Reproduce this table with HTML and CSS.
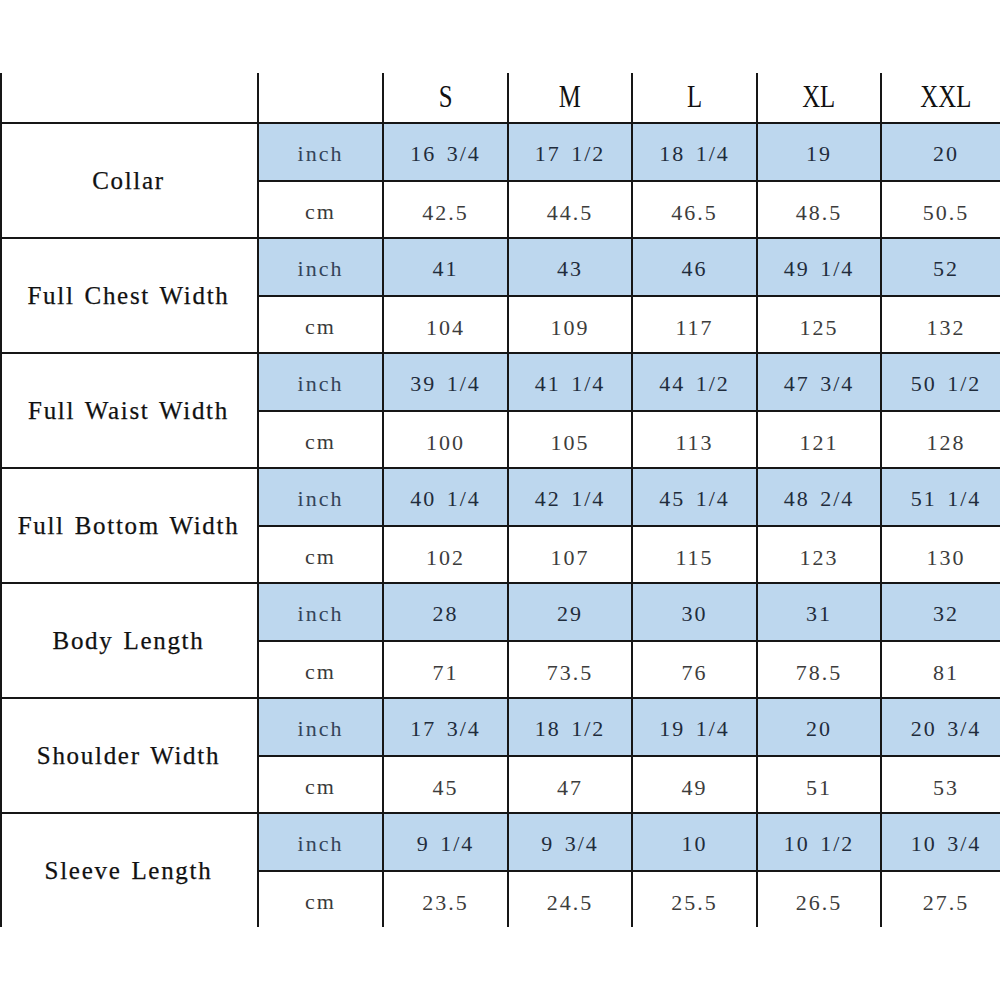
FILE: index.html
```html
<!DOCTYPE html>
<html>
<head>
<meta charset="utf-8">
<link rel="stylesheet" href="styles.css">
</head>
<body>
<div class="sheet">
  <div class="cell head"></div>
  <div class="cell head"></div>
  <div class="cell head"><span class="sz">S</span></div>
  <div class="cell head"><span class="sz">M</span></div>
  <div class="cell head"><span class="sz">L</span></div>
  <div class="cell head"><span class="sz">XL</span></div>
  <div class="cell head"><span class="sz">XXL</span></div>

  <div class="cell label">Collar</div>
  <div class="cell blue unit">inch</div>
  <div class="cell blue val">16 3/4</div>
  <div class="cell blue val">17 1/2</div>
  <div class="cell blue val">18 1/4</div>
  <div class="cell blue val">19</div>
  <div class="cell blue val">20</div>
  <div class="cell unit cm">cm</div>
  <div class="cell val cmv">42.5</div>
  <div class="cell val cmv">44.5</div>
  <div class="cell val cmv">46.5</div>
  <div class="cell val cmv">48.5</div>
  <div class="cell val cmv">50.5</div>

  <div class="cell label">Full Chest Width</div>
  <div class="cell blue unit">inch</div>
  <div class="cell blue val">41</div>
  <div class="cell blue val">43</div>
  <div class="cell blue val">46</div>
  <div class="cell blue val">49 1/4</div>
  <div class="cell blue val">52</div>
  <div class="cell unit cm">cm</div>
  <div class="cell val cmv">104</div>
  <div class="cell val cmv">109</div>
  <div class="cell val cmv">117</div>
  <div class="cell val cmv">125</div>
  <div class="cell val cmv">132</div>

  <div class="cell label">Full Waist Width</div>
  <div class="cell blue unit">inch</div>
  <div class="cell blue val">39 1/4</div>
  <div class="cell blue val">41 1/4</div>
  <div class="cell blue val">44 1/2</div>
  <div class="cell blue val">47 3/4</div>
  <div class="cell blue val">50 1/2</div>
  <div class="cell unit cm">cm</div>
  <div class="cell val cmv">100</div>
  <div class="cell val cmv">105</div>
  <div class="cell val cmv">113</div>
  <div class="cell val cmv">121</div>
  <div class="cell val cmv">128</div>

  <div class="cell label">Full Bottom Width</div>
  <div class="cell blue unit">inch</div>
  <div class="cell blue val">40 1/4</div>
  <div class="cell blue val">42 1/4</div>
  <div class="cell blue val">45 1/4</div>
  <div class="cell blue val">48 2/4</div>
  <div class="cell blue val">51 1/4</div>
  <div class="cell unit cm">cm</div>
  <div class="cell val cmv">102</div>
  <div class="cell val cmv">107</div>
  <div class="cell val cmv">115</div>
  <div class="cell val cmv">123</div>
  <div class="cell val cmv">130</div>

  <div class="cell label">Body Length</div>
  <div class="cell blue unit">inch</div>
  <div class="cell blue val">28</div>
  <div class="cell blue val">29</div>
  <div class="cell blue val">30</div>
  <div class="cell blue val">31</div>
  <div class="cell blue val">32</div>
  <div class="cell unit cm">cm</div>
  <div class="cell val cmv">71</div>
  <div class="cell val cmv">73.5</div>
  <div class="cell val cmv">76</div>
  <div class="cell val cmv">78.5</div>
  <div class="cell val cmv">81</div>

  <div class="cell label">Shoulder Width</div>
  <div class="cell blue unit">inch</div>
  <div class="cell blue val">17 3/4</div>
  <div class="cell blue val">18 1/2</div>
  <div class="cell blue val">19 1/4</div>
  <div class="cell blue val">20</div>
  <div class="cell blue val">20 3/4</div>
  <div class="cell unit cm">cm</div>
  <div class="cell val cmv">45</div>
  <div class="cell val cmv">47</div>
  <div class="cell val cmv">49</div>
  <div class="cell val cmv">51</div>
  <div class="cell val cmv">53</div>

  <div class="cell label">Sleeve Length</div>
  <div class="cell blue unit">inch</div>
  <div class="cell blue val">9 1/4</div>
  <div class="cell blue val">9 3/4</div>
  <div class="cell blue val">10</div>
  <div class="cell blue val">10 1/2</div>
  <div class="cell blue val">10 3/4</div>
  <div class="cell unit cm">cm</div>
  <div class="cell val cmv">23.5</div>
  <div class="cell val cmv">24.5</div>
  <div class="cell val cmv">25.5</div>
  <div class="cell val cmv">26.5</div>
  <div class="cell val cmv">27.5</div>
</div>
</body>
</html>
```

FILE: styles.css
```css
html, body {
  margin: 0;
  padding: 0;
  background: #ffffff;
  overflow: hidden;
}
body {
  width: 1000px;
  height: 1000px;
}
.sheet {
  margin-top: 73px;
  width: 1010px;
  display: grid;
  grid-template-columns: 257px 125px 125px 124px 125px 124px 130px;
  grid-template-rows: 49px repeat(7, 58px 57px);
}
.cell {
  box-sizing: border-box;
  border-left: 2px solid #161616;
  border-top: 2px solid #161616;
  display: flex;
  align-items: center;
  justify-content: center;
  font-family: "Liberation Serif", "Times New Roman", serif;
  white-space: pre;
}
.head {
  border-top: none;
  font-size: 31px;
  color: #111;
}
.sz {
  display: inline-block;
  transform: scaleX(0.8);
  padding-bottom: 2px;
}
.label {
  grid-row: span 2;
  font-size: 25px;
  letter-spacing: 1.7px;
  word-spacing: 2px;
  color: #111;
  -webkit-text-stroke: 0.25px #111;
  padding-right: 2px;
}
.blue {
  background: #bdd7ee;
  color: #1f2c3c;
}
.unit {
  font-size: 22px;
  letter-spacing: 2px;
}
.blue.unit {
  color: #33445a;
  padding-top: 4px;
}
.cm {
  color: #3a3a3a;
  padding-top: 4px;
}
.val {
  font-size: 22px;
  letter-spacing: 2px;
  word-spacing: 3px;
  padding-top: 3px;
}
.cmv {
  color: #3c3c3c;
  padding-top: 6px;
}
```
